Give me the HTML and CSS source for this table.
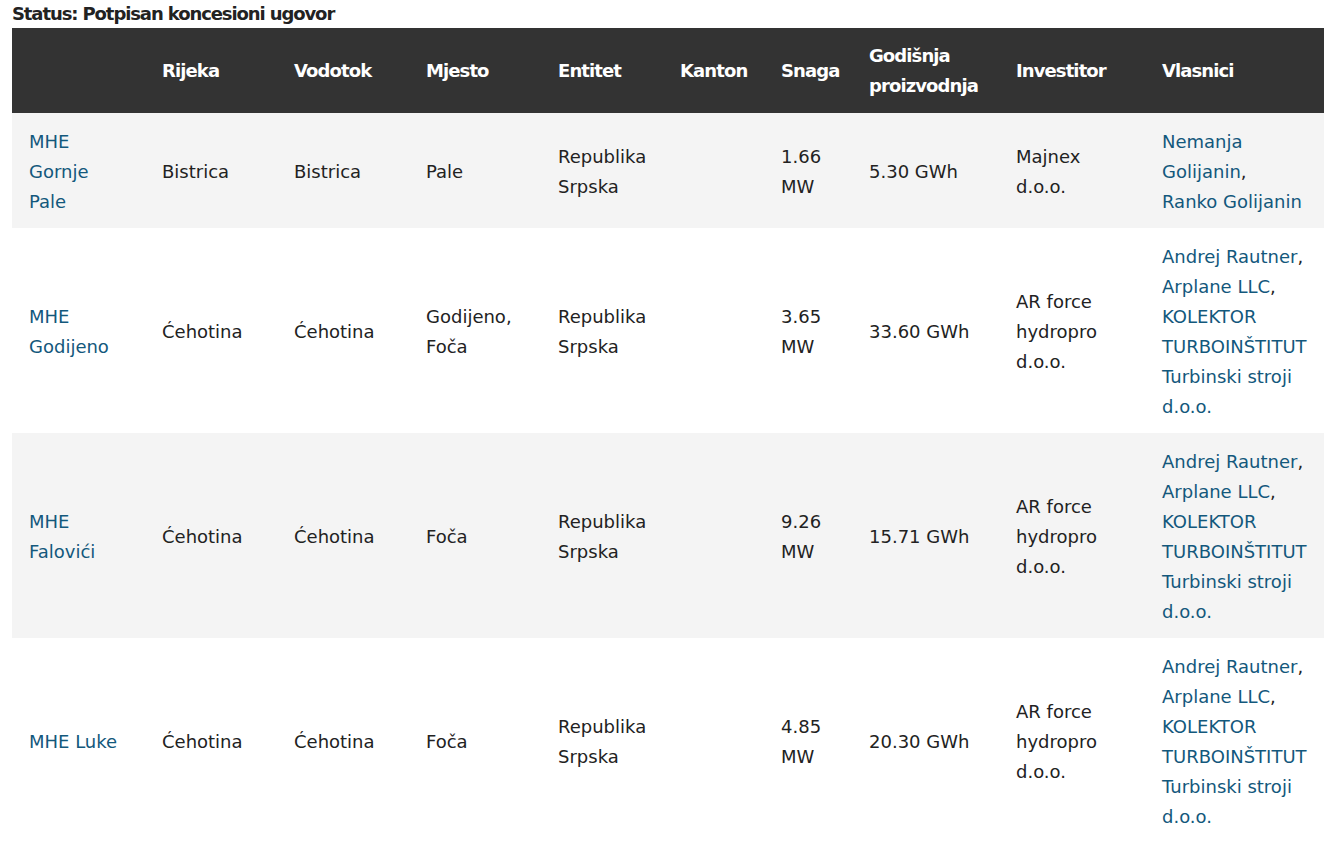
FILE: index.html
```html
<!DOCTYPE html>
<html lang="bs">
<head>
<meta charset="utf-8">
<title>MHE</title>
<link rel="stylesheet" href="styles.css">
</head>
<body>
<div class="page">
  <p class="status">Status: Potpisan koncesioni ugovor</p>
  <table class="plants">
    <colgroup>
      <col class="c-name"><col class="c-rijeka"><col class="c-vodotok"><col class="c-mjesto"><col class="c-entitet"><col class="c-kanton"><col class="c-snaga"><col class="c-god"><col class="c-inv"><col class="c-vl">
    </colgroup>
    <thead>
      <tr>
        <th></th><th>Rijeka</th><th>Vodotok</th><th>Mjesto</th><th>Entitet</th><th>Kanton</th><th>Snaga</th><th>Godišnja proizvodnja</th><th>Investitor</th><th>Vlasnici</th>
      </tr>
    </thead>
    <tbody>
      <tr>
        <td><a href="#">MHE Gornje Pale</a></td><td>Bistrica</td><td>Bistrica</td><td>Pale</td><td>Republika Srpska</td><td></td><td>1.66 MW</td><td>5.30 GWh</td><td>Majnex d.o.o.</td><td><a href="#">Nemanja Golijanin</a>, <a href="#">Ranko Golijanin</a></td>
      </tr>
      <tr>
        <td><a href="#">MHE Godijeno</a></td><td>Ćehotina</td><td>Ćehotina</td><td>Godijeno, Foča</td><td>Republika Srpska</td><td></td><td>3.65 MW</td><td>33.60 GWh</td><td>AR force hydropro d.o.o.</td><td><a href="#">Andrej Rautner</a>, <a href="#">Arplane LLC</a>, <a href="#">KOLEKTOR TURBOINŠTITUT Turbinski stroji d.o.o.</a></td>
      </tr>
      <tr>
        <td><a href="#">MHE Falovići</a></td><td>Ćehotina</td><td>Ćehotina</td><td>Foča</td><td>Republika Srpska</td><td></td><td>9.26 MW</td><td>15.71 GWh</td><td>AR force hydropro d.o.o.</td><td><a href="#">Andrej Rautner</a>, <a href="#">Arplane LLC</a>, <a href="#">KOLEKTOR TURBOINŠTITUT Turbinski stroji d.o.o.</a></td>
      </tr>
      <tr>
        <td><a href="#">MHE Luke</a></td><td>Ćehotina</td><td>Ćehotina</td><td>Foča</td><td>Republika Srpska</td><td></td><td>4.85 MW</td><td>20.30 GWh</td><td>AR force hydropro d.o.o.</td><td><a href="#">Andrej Rautner</a>, <a href="#">Arplane LLC</a>, <a href="#">KOLEKTOR TURBOINŠTITUT Turbinski stroji d.o.o.</a></td>
      </tr>
    </tbody>
  </table>
</div>
</body>
</html>
```

FILE: styles.css
```css
html, body {
  margin: 0;
  padding: 0;
  background: #fff;
  overflow: hidden;
}
body {
  font-family: "DejaVu Sans", "Open Sans", sans-serif;
  font-size: 18px;
  line-height: 30px;
  color: #222;
}
.page {
  padding: 0 0 0 12px;
}
.status {
  margin: 0;
  font-weight: bold;
  line-height: 28px;
  letter-spacing: -1.1px;
  color: #222;
}
.plants {
  border-collapse: collapse;
  table-layout: fixed;
  width: 1312px;
}
.c-name { width: 133px; }
.c-rijeka { width: 132px; }
.c-vodotok { width: 132px; }
.c-mjesto { width: 132px; }
.c-entitet { width: 122px; }
.c-kanton { width: 101px; }
.c-snaga { width: 88px; }
.c-god { width: 147px; }
.c-inv { width: 146px; }
.c-vl { width: 179px; }
.plants th {
  background: #333;
  color: #fff;
  font-weight: bold;
  letter-spacing: -0.9px;
  text-align: left;
  vertical-align: middle;
  padding: 13px 17px 12px;
  height: 60px;
}
.plants td {
  vertical-align: middle;
  padding: 14px 17px 11px;
}
.plants tbody tr:nth-child(odd) td {
  background: #f4f4f4;
}
.plants a {
  color: #13587c;
  text-decoration: none;
}
```
